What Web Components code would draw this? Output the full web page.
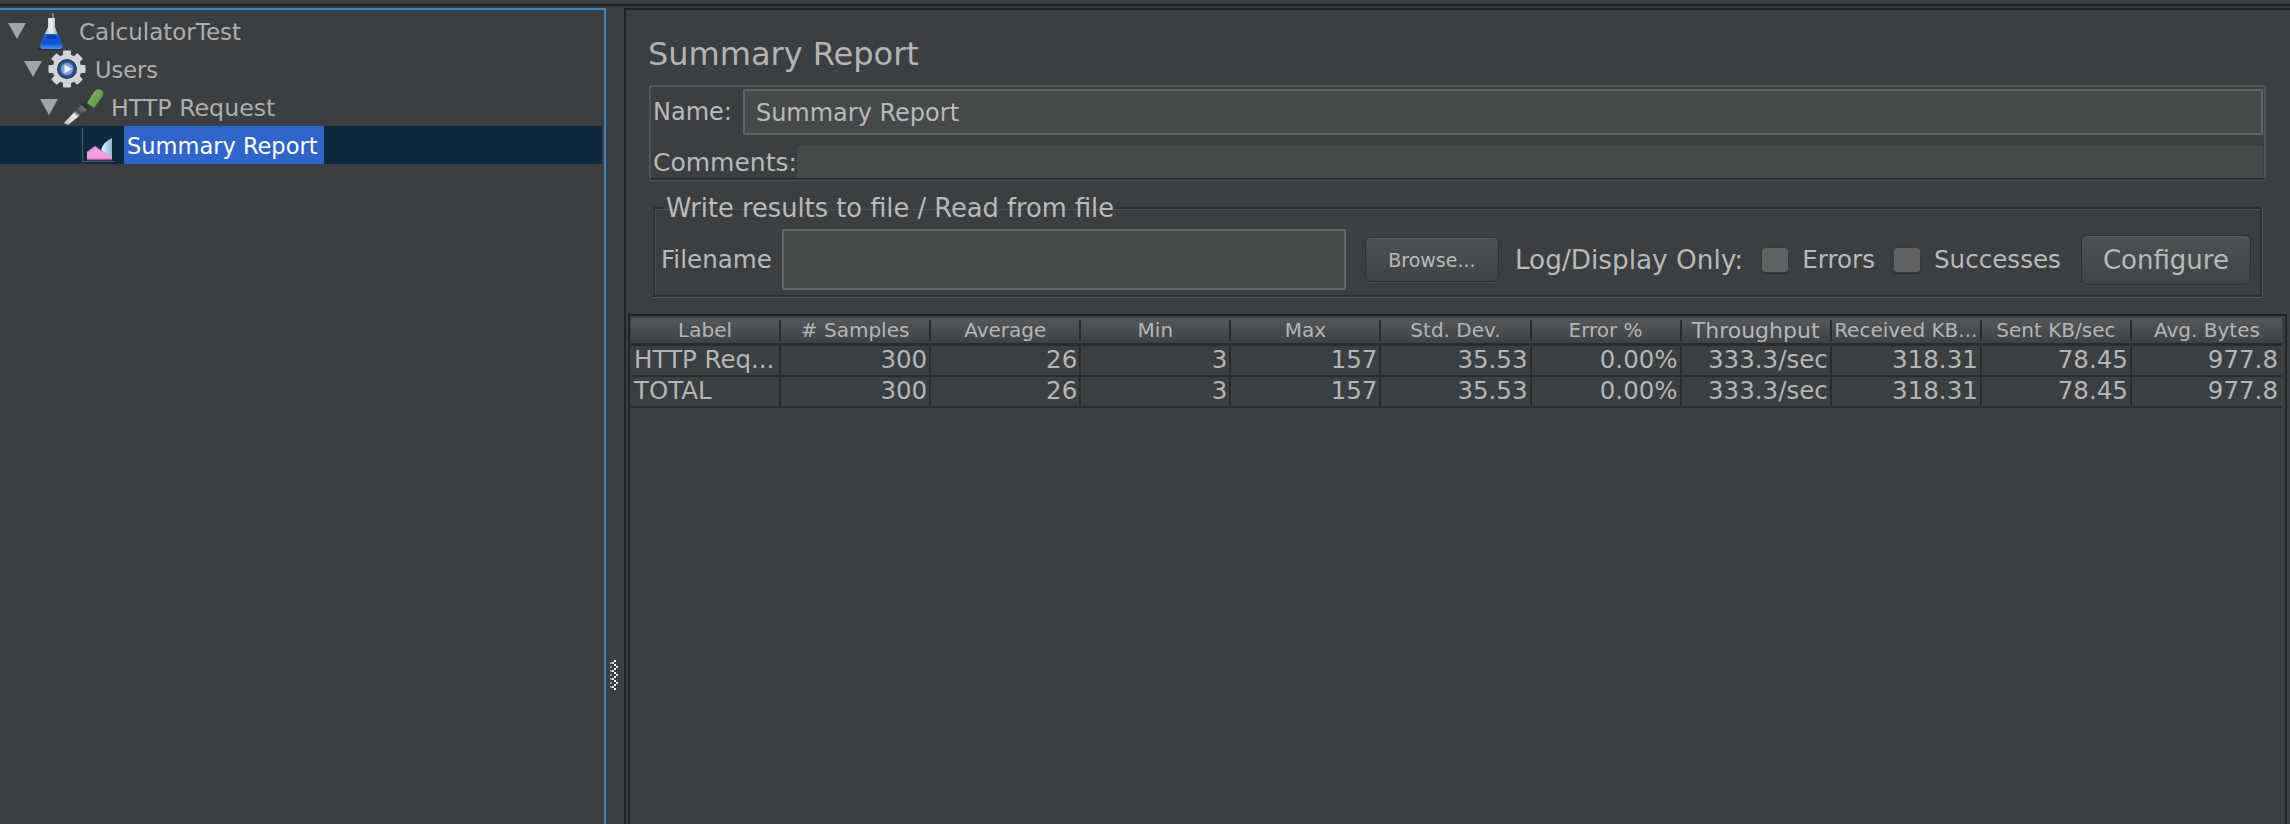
<!DOCTYPE html>
<html lang="en">

<head>
    <meta charset="utf-8">
    <title>Summary Report</title>
</head>

<style>
    html, body {
        margin: 0px;
        padding: 0px;
        height: 100%;
        overflow: hidden;
        background: #3c3f41;
        color: #bbbbbb;
        font-family: "DejaVu Sans", "Liberation Sans", sans-serif;
    }
</style>

<body>
    <jm-app>
        <jm-tree slot="tree">
            <jm-node level="0" icon="flask" label="CalculatorTest" size="23" open></jm-node>
            <jm-node level="1" icon="gear" label="Users" size="22.5" open></jm-node>
            <jm-node level="2" icon="dropper" label="HTTP Request" size="23.7" open></jm-node>
            <jm-node level="3" icon="chart" label="Summary Report" size="22.5" selected></jm-node>
        </jm-tree>
        <jm-report slot="report"></jm-report>
    </jm-app>
</body>

<script>"use strict";</script>

<script>
    const icons = {
        flask: `
            <defs>
                <linearGradient id="glass" x1="0" x2="1" y1="0" y2="0">
                    <stop offset="0" stop-color="#7f868d"/><stop offset=".5" stop-color="#eef1f4"/><stop offset="1" stop-color="#7d858e"/>
                </linearGradient>
                <linearGradient id="liquid" x1="0" x2="0" y1="0" y2="1">
                    <stop offset="0" stop-color="#1c5fd0"/><stop offset=".6" stop-color="#0f4fd6"/><stop offset="1" stop-color="#3f9bf0"/>
                </linearGradient>
            </defs>
            <ellipse cx="24" cy="37" rx="13" ry="1.500" fill="#2a2d2f"/>
            <rect x="26" y="1" width="2" height="6" fill="#7d8185"/>
            <path d="M22 6h7v9l6 16q2 6-3 6H18q-5 0-3-6l7-16z" fill="url(#glass)"/>
            <path d="M18.500 22h14l3.500 9q2 6-3 6H18q-5 0-3-6z" fill="url(#liquid)"/>
            <ellipse cx="25.500" cy="25" rx="5" ry="2" fill="#0a3faa"/>`,
        gear: `
            <defs>
                <radialGradient id="hub">
                    <stop offset="0" stop-color="#9fb8e0"/><stop offset=".55" stop-color="#3f6cb0"/><stop offset="1" stop-color="#1b2f55"/>
                </radialGradient>
            </defs>
            <g transform="translate(25 19)" fill="#d2d5d8">
                <circle r="14.500"/>
                <rect x="-4" y="-18.500" width="8" height="37" rx="1"/>
                <rect x="-4" y="-18.500" width="8" height="37" rx="1" transform="rotate(45)"/>
                <rect x="-4" y="-18.500" width="8" height="37" rx="1" transform="rotate(90)"/>
                <rect x="-4" y="-18.500" width="8" height="37" rx="1" transform="rotate(135)"/>
                <circle r="10" fill="url(#hub)"/>
                <circle r="6" fill="#7f9fd4"/>
                <path d="M-2.500-4.500 5 0-2.500 4.500z" fill="#eef2f8"/>
            </g>`,
        dropper: `
            <defs>
                <linearGradient id="bulb" x1="0" x2="1" y1="0" y2="1">
                    <stop offset="0" stop-color="#86c070"/><stop offset="1" stop-color="#4b8a3c"/>
                </linearGradient>
                <linearGradient id="tube" x1="0" x2="1" y1="1" y2="0">
                    <stop offset="0" stop-color="#b9b9b9"/><stop offset=".45" stop-color="#efefef"/><stop offset=".6" stop-color="#4a4a4a"/><stop offset="1" stop-color="#9a9a9a"/>
                </linearGradient>
            </defs>
            <path d="M6 35 24 16l6 5-20 16z" fill="url(#tube)"/>
            <path d="M25 14l7 6-3 2-7-6z" fill="#2f3a2c"/>
            <path d="M29 15l7-11q3-4 7-2t1 7l-8 11z" fill="url(#bulb)"/>
            <path d="M8 38h24" stroke="#35383a" stroke-width="1"/>`,
        chart: `
            <defs>
                <linearGradient id="wedge" x1="0" x2="1" y1="0" y2="0">
                    <stop offset="0" stop-color="#eef5fd"/><stop offset="1" stop-color="#8db2e0"/>
                </linearGradient>
            </defs>
            <path d="M8.500 2v33.500H41" fill="none" stroke="#4a5a68" stroke-width="1"/>
            <path d="M13 34V26l8-6 7 5 10 1v8z" fill="#ee9fe0"/>
            <path d="M13 26l8-6 7 5" fill="none" stroke="#a04f90" stroke-width="1"/>
            <path d="M13 33.500h25" stroke="#b3559b" stroke-width="1.500"/>
            <path d="M27 24q2-8 11-12v19l-6-4z" fill="url(#wedge)"/>`
    }

    class JmApp extends HTMLElement {
        constructor() {
            super()
            this.attachShadow({ mode: "open" }).innerHTML = `
            <style>
                :host { display: block; height: 824px; background: #3c3f41; }
                .top { height: 4px; }
                .rule { height: 2px; background: #1f2021; }
                .gap { height: 2px; background: #35383a; }
                .main { display: flex; height: 816px; }
                .left { width: 604px; border-top: 2px solid #3b84c4; border-right: 2px solid #3b84c4; flex: none; }
                .split { width: 18px; flex: none; padding: 652px 0 0 4px; box-sizing: border-box; }
                .right { flex: 1; min-width: 0; border-top: 2px solid #222425; border-left: 2px solid #222425; }
            </style>
            <div class="top"></div>
            <div class="rule"></div>
            <div class="gap"></div>
            <div class="main">
                <div class="left"><slot name="tree"></slot></div>
                <div class="split">
                    <svg width="8" height="30" viewBox="0 0 8 30">
                        <defs>
                            <pattern id="grip" width="8" height="8" patternUnits="userSpaceOnUse">
                                <rect x="4" y="0" width="2" height="2" fill="#ffffff"/>
                                <rect x="0" y="2" width="2" height="2" fill="#9a9a9a"/>
                                <rect x="2" y="2" width="2" height="2" fill="#dddddd"/>
                                <rect x="4" y="4" width="2" height="2" fill="#ffffff"/>
                                <rect x="0" y="6" width="2" height="2" fill="#9a9a9a"/>
                                <rect x="6" y="6" width="2" height="2" fill="#dddddd"/>
                            </pattern>
                        </defs>
                        <rect width="8" height="30" fill="url(#grip)"/>
                    </svg>
                </div>
                <div class="right"><slot name="report"></slot></div>
            </div>`
        }
    }
    customElements.define("jm-app", JmApp)

    class JmTree extends HTMLElement {
        constructor() {
            super()
            this.attachShadow({ mode: "open" }).innerHTML = `
            <style>
                :host { display: block; padding: 2px 2px 0 0; }
            </style>
            <slot></slot>`
        }
    }
    customElements.define("jm-tree", JmTree)

    class JmNode extends HTMLElement {
        connectedCallback() {
            if (this.shadowRoot) return
            const level = Number(this.getAttribute("level"))
            const root = this.attachShadow({ mode: "open" })
            root.innerHTML = `
            <style>
                :host { display: flex; align-items: center; height: 38px; color: #aeaeae; white-space: nowrap; }
                :host([selected]) { background: #0d293e; }
                .tri { width: 18px; height: 16px; flex: none; }
                .tri.on { background: #a3a3a3; clip-path: polygon(0 0, 100% 0, 50% 100%); }
                svg { flex: none; display: block; }
                .label { width: 191px; line-height: 36px; padding: 2px 6px 0 3px; font-size: ${this.getAttribute("size")}px; }
                :host([selected]) .label { background: #2f65ca; color: #ffffff; }
            </style>
            <span class="tri ${this.hasAttribute("open") ? "on" : ""}" style="margin-left:${8 + 16 * level}px"></span>
            <svg width="50" height="38" viewBox="0 0 50 38">${icons[this.getAttribute("icon")]}</svg>
            <span class="label">${this.getAttribute("label")}</span>`
        }
    }
    customElements.define("jm-node", JmNode)

    class JmButton extends HTMLElement {
        constructor() {
            super()
            this.attachShadow({ mode: "open" }).innerHTML = `
            <style>
                :host {
                    display: flex; align-items: center; justify-content: center; flex: none; box-sizing: border-box;
                    border: 1px solid #2f3233; border-radius: 6px;
                    background: linear-gradient(#4d5153, #404446);
                    box-shadow: inset 0 1px 0 #565a5c, 0 1px 0 #50545699;
                    color: #b9b9b9;
                }
            </style>
            <slot></slot>`
        }
    }
    customElements.define("jm-button", JmButton)

    class JmCheck extends HTMLElement {
        constructor() {
            super()
            this.attachShadow({ mode: "open" }).innerHTML = `
            <style>
                :host { display: flex; align-items: center; gap: 13px; flex: none; font-size: 24.6px; }
                .box {
                    width: 28px; height: 26px; box-sizing: border-box; border-radius: 4px;
                    background: #5f6162; border: 1px solid #37393a;
                    box-shadow: 0 1px 0 #2e3031;
                }
            </style>
            <span class="box"></span><slot></slot>`
        }
    }
    customElements.define("jm-check", JmCheck)

    class JmTable extends HTMLElement {
        connectedCallback() {
            if (this.shadowRoot) return
            const cols = ["Label", "# Samples", "Average", "Min", "Max", "Std. Dev.", "Error %", "Throughput", "Received KB...", "Sent KB/sec", "Avg. Bytes"]
            const rows = [
                ["HTTP Req...", "300", "26", "3", "157", "35.53", "0.00%", "333.3/sec", "318.31", "78.45", "977.8"],
                ["TOTAL", "300", "26", "3", "157", "35.53", "0.00%", "333.3/sec", "318.31", "78.45", "977.8"],
            ]
            const head = cols.map(c => `<div class="h">${c}</div>`).join("")
            const body = rows.map(r => `<div class="row">` + r.map((v, i) => `<div class="c ${i ? "num" : ""}">${v}</div>`).join("") + `</div>`).join("")
            this.attachShadow({ mode: "open" }).innerHTML = `
            <style>
                :host {
                    display: block; flex: 1; margin: 17px 3px 0 2px; padding: 2px 3px 0 1px;
                    border-top: 2px solid #222425; border-left: 2px solid #222425; border-right: 2px solid #222425;
                }
                .head, .row { display: grid; grid-template-columns: repeat(11, minmax(0, 1fr)); }
                .head {
                    height: 25px; background: linear-gradient(#54585b, #3f4244);
                    border-bottom: 3px solid #292b2c; font-size: 20px; color: #b5b5b5; white-space: nowrap;
                }
                .h { text-align: center; margin: 2px 0; line-height: 21px; border-right: 2px solid #292b2c; }
                .h:last-child { border-right: 0; }
                .h:nth-child(8) { font-size: 22px; }
                .row { height: 29px; border-bottom: 2px solid #292b2c; font-size: 24.5px; color: #b5b5b5; }
                .c { line-height: 28px; padding: 0 2px 0 3px; border-right: 2px solid #292b2c; white-space: nowrap; }
                .c:last-child { border-right: 0; padding-right: 4px; }
                .num { text-align: right; }
            </style>
            <div class="head">${head}</div>
            ${body}`
        }
    }
    customElements.define("jm-table", JmTable)

    class JmReport extends HTMLElement {
        constructor() {
            super()
            this.attachShadow({ mode: "open" }).innerHTML = `
            <style>
                :host { display: flex; flex-direction: column; height: 814px; box-sizing: border-box; font-size: 24px; color: #b9b9b9; }
                h1 { margin: 0 0 0 22px; height: 75px; line-height: 54px; padding-top: 17px; font-size: 32px; font-weight: 400; box-sizing: border-box; color: #b4b4b4; }
                .names {
                    margin: 0 24px 0 23px; height: 95px; box-sizing: border-box;
                    border: 2px solid #535658; border-bottom-color: #2d2f30; padding: 2px 1px 0 2px;
                    box-shadow: 0 1px 0 #555;
                }
                .line { display: flex; align-items: center; }
                .field {
                    flex: 1; height: 46px; box-sizing: border-box; margin-left: 11px; padding: 1px 0 0 11px;
                    background: #45494a; border: 2px solid #646464; line-height: 42px;
                }
                .comments { margin-top: 11px; height: 32px; font-size: 25px; }
                .comments .area { flex: 1; height: 32px; background: #45494a; }
                fieldset {
                    margin: 15px 28px 0 27px; padding: 0 10px 5px 6px; min-width: 0; height: 102px; box-sizing: border-box;
                    border: 2px solid #2e3031; box-shadow: 0 1px 0 #555, 1px 0 0 #555, inset 1px 1px 0 #4c4f51;
                }
                legend { padding: 0 2px; margin-left: 3px; line-height: 26px; font-size: 25.7px; }
                .file { display: flex; align-items: center; height: 61px; margin-top: 8px; }
                .file .name { font-size: 24.6px; }
                .file .input {
                    width: 564px; height: 61px; box-sizing: border-box; margin-left: 10px; flex: none;
                    background: #45494a; border: 2px solid #646464;
                }
                .browse { width: 134px; height: 45px; margin-left: 19px; font-size: 19px; }
                .log { margin-left: 16px; white-space: nowrap; font-size: 26.3px; }
                .e { margin-left: 18px; }
                .configure { width: 170px; height: 50px; margin-left: 20px; font-size: 26px; }
            </style>
            <h1>Summary Report</h1>
            <div class="names">
                <div class="line"><span>Name:</span><div class="field">Summary Report</div></div>
                <div class="line comments"><span>Comments:</span><div class="area"></div></div>
            </div>
            <fieldset>
                <legend>Write results to file / Read from file</legend>
                <div class="file">
                    <span class="name">Filename</span>
                    <div class="input"></div>
                    <jm-button class="browse">Browse...</jm-button>
                    <span class="log">Log/Display Only:</span>
                    <jm-check class="e">Errors</jm-check>
                    <jm-check class="e">Successes</jm-check>
                    <jm-button class="configure">Configure</jm-button>
                </div>
            </fieldset>
            <jm-table></jm-table>`
        }
    }
    customElements.define("jm-report", JmReport)
</script>

</html>
